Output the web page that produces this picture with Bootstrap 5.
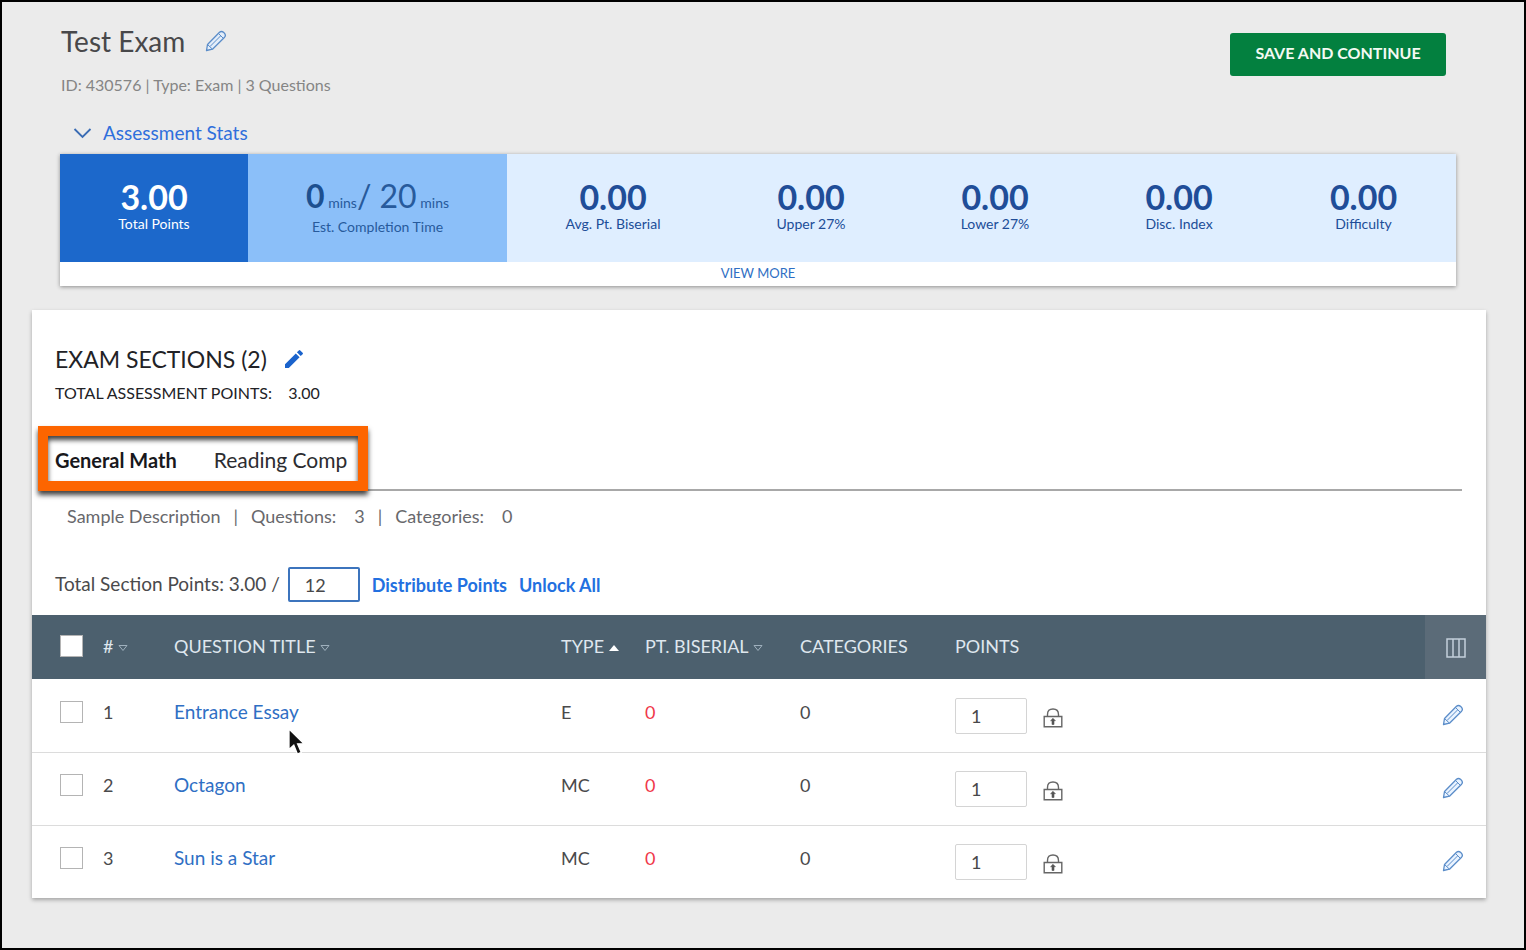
<!DOCTYPE html>
<html lang="en">
<head>
<meta charset="utf-8">
<meta name="viewport" content="width=device-width, initial-scale=1">
<title>Test Exam</title>
<link href="https://cdn.jsdelivr.net/npm/bootstrap@5.3.0/dist/css/bootstrap.min.css" rel="stylesheet">
<style>
  body { font-family: Lato, "Open Sans", sans-serif; font-size: 18px; line-height: 20px; color: #4a4a4c; background: #ebebeb; }
  a { text-decoration: none; color: #2f6fc4; }
  .page-frame { min-height: 100vh; border: 2px solid #000; padding: 0 38px 24px 30px; }
  .page-head { padding: 22px 30px 0 28px; }
  .exam-title { font-size: 28px; line-height: 34px; font-weight: 400; color: #48484a; margin-right: 20px; }
  .exam-meta { font-size: 16px; color: #858585; margin-top: 17px; }
  .title-block { padding-left: 1px; }
  .icon-btn { border: 0; background: none; padding: 0; line-height: 0; color: inherit; }
  .save-btn { font-size: 16px; font-weight: 700; line-height: 20px; width: 216px; padding: 10px 0 13px; margin: 9px 10px 0 0; border-radius: 3px; border: 0; background: #03803f; color: #f3faf3; }
  .stats-toggle { font-size: 19px; line-height: 20px; color: #2f6fdc; margin-top: 28px; padding: 0 0 0 13px; gap: 10px; }
  .stats-box { margin: 11px 0 0; background: #fff; box-shadow: 0 1px 4px rgba(0,0,0,.4); }
  .stats-grid { display: grid; grid-template-columns: 188fr 259fr 212fr 184fr 184fr 184fr 185fr; background: #dfeeff; color: #204d98; text-align: center; }
  .stat { height: 108px; padding-top: 24px; }
  .stat-num { font-size: 34px; line-height: 38px; font-weight: 700; }
  .stat-cap { font-size: 14px; line-height: 16px; }
  .stat-total { background: #1c68cb; color: #fff; }
  .stat-time { background: #8bbff9; color: #275a9c; }
  .stat-time .stat-num { font-size: 32px; font-weight: 400; line-height: 36px; }
  .stat-time .stat-num b { color: #1d5090; }
  .stat-time .stat-cap { margin-top: 5px; }
  .stat-time small { font-size: 14px; line-height: 14px; }
  .view-more { font-size: 13px; line-height: 22px; padding-bottom: 2px; }
  .panel { margin-top: 24px; background: #fff; box-shadow: 0 2px 4px rgba(0,0,0,.3); }
  .panel-head { padding: 35px 24px 13px 23px; }
  .sec-title { font-size: 23px; line-height: 28px; font-weight: 400; color: #222226; margin-right: 18px; }
  .sec-points { font-size: 16px; color: #222226; margin-top: 10px; }
  .sec-points span { margin-left: 12px; }
  .tab-row { margin-top: 45px; padding-bottom: 17px; border-bottom: 2px solid #a8a8a8; }
  .tab-set { position: relative; gap: 37px; }
  .tab-set button { font-size: 21px; line-height: 24px; color: #2c2c30; border: 0; background: none; padding: 0; }
  .tab-set button.active { font-size: 20px; font-weight: 700; color: #18181c; }
  .callout { position: absolute; inset: -22px -21px -19px -17px; border: 10px solid #fd6500; box-shadow: 0 4px 5px rgba(0,0,0,.75), inset 0 4px 5px rgba(0,0,0,.75); pointer-events: none; }
  .desc-row { font-size: 18px; color: #68686c; margin-top: 15px; padding-left: 12px; }
  .desc-row .sep { margin: 0 13px; }
  .desc-row .val { margin-left: 18px; }
  .points-row { margin-top: 41px; gap: 12px; }
  .total-field { gap: 8px; }
  .total-field label { font-size: 19px; padding-bottom: 2px; }
  .pts-input { width: 72px; height: 36px; font-size: 18px; color: #48484a; border: 1px solid #d4d4d4; border-radius: 2px; padding: 0 15px; background: #fff; }
  .pts-input.current { height: 35px; border: 2px solid #3c74bd; outline: 0; }
  .link-btn { border: 0; background: none; padding: 0; font-size: 18px; font-weight: 700; color: #2270e0; }
  .q-table { width: 100%; table-layout: fixed; border-collapse: separate; border-spacing: 0; }
  .q-table th { height: 64px; background: #4c606e; color: #dfe7ee; font-weight: 400; padding: 0 0 2px; white-space: nowrap; }
  .q-table th.cols-cell { background: #5b6b78; padding: 0; }
  .q-table td { height: 73px; padding: 0; border-top: 1px solid #fff; }
  .q-table tbody tr + tr td { border-top-color: #dcdcdc; }
  .q-table td > .lift { display: inline-block; padding-bottom: 8px; }
  .q-table td > a.lift { font-size: 19px; }
  .q-table td.red-val { color: #f0384a; }
  .q-table td.edit-cell { padding: 0 6px 4px 0; }
  .tick { appearance: none; display: block; width: 23px; height: 22px; margin: 0 0 0 28px; border: 1px solid #b4b4b4; background: #fff; }
  tbody .tick { margin-bottom: 8px; }
  .pointer { position: absolute; left: 114px; top: 48px; pointer-events: none; }
</style>
</head>
<body>
<svg width="0" height="0" class="position-absolute" aria-hidden="true">
  <symbol id="pencil" viewBox="0 0 22 22">
    <path d="M1.500 20.500 2.500 14.500 14.500 2.300Q16.500.600 18.800 2.600 21.500 5 19.600 7.200L7.500 19.200Z" fill="#dfeeff" fill-opacity=".7" stroke="#5b8dc9" stroke-width="1.300" stroke-linejoin="round"/>
    <path d="M2.500 14.500 7.500 19.200M13.500 3.500 18.300 8.300M5 16.500 15.500 6" fill="none" stroke="#5b8dc9" stroke-width="1"/>
  </symbol>
  <symbol id="lock" viewBox="0 0 20 20">
    <path d="M1.200 8.500H18.800V18.800H1.200ZM4.500 8.500V6.500Q4.500 1 10 1T15.500 6.500V8.500" fill="none" stroke="#666" stroke-width="1.400"/>
    <path d="M10 10.300 12.400 12.700H11V16.500H9V12.700H7.600Z" fill="#555" stroke="#555" stroke-width=".6"/>
  </symbol>
  <symbol id="sort" viewBox="0 0 10 8"><path d="M1 1.500H9L5 6.500Z" fill="none" stroke="#9fb0bd" stroke-width="1"/></symbol>
</svg>
<div class="page-frame">
  <header class="page-head">
    <div class="d-flex justify-content-between align-items-start">
      <div class="title-block">
        <div class="d-flex align-items-center">
          <h1 class="exam-title mb-0">Test Exam</h1>
          <button class="icon-btn" aria-label="Edit exam title"><svg width="22" height="22"><use href="#pencil"/></svg></button>
        </div>
        <div class="exam-meta">ID: 430576 | Type: Exam | 3 Questions</div>
      </div>
      <button class="btn save-btn">SAVE AND CONTINUE</button>
    </div>
    <button class="icon-btn stats-toggle d-flex align-items-center">
      <svg width="20" height="14" viewBox="0 0 20 14"><path d="M1.500 3 9.500 11 17.500 3" fill="none" stroke="#3a6cb4" stroke-width="1.800"/></svg>
      <span>Assessment Stats</span>
    </button>
    <section class="stats-box">
      <div class="stats-grid">
        <div class="stat stat-total"><div class="stat-num">3.00</div><div class="stat-cap">Total Points</div></div>
        <div class="stat stat-time"><div class="stat-num"><b>0</b><small> mins</small>/ 20<small> mins</small></div><div class="stat-cap">Est. Completion Time</div></div>
        <div class="stat"><div class="stat-num">0.00</div><div class="stat-cap">Avg. Pt. Biserial</div></div>
        <div class="stat"><div class="stat-num">0.00</div><div class="stat-cap">Upper 27%</div></div>
        <div class="stat"><div class="stat-num">0.00</div><div class="stat-cap">Lower 27%</div></div>
        <div class="stat"><div class="stat-num">0.00</div><div class="stat-cap">Disc. Index</div></div>
        <div class="stat"><div class="stat-num">0.00</div><div class="stat-cap">Difficulty</div></div>
      </div>
      <div class="text-center view-more"><a href="#">VIEW MORE</a></div>
    </section>
  </header>

  <main class="panel">
    <div class="panel-head">
      <div class="d-flex align-items-center">
        <h2 class="sec-title mb-0">EXAM SECTIONS (2)</h2>
        <button class="icon-btn" aria-label="Edit sections"><svg width="18" height="18" viewBox="0 0 18 18" fill="#1a63cc"><path d="M0 14.200V18H3.800L14.600 7.200 10.800 3.400ZM11.900 2.300 15.700 6.100 17.600 4.200Q18.300 3.400 17.600 2.700L15.300.400Q14.600-.300 13.800.400Z"/></svg></button>
      </div>
      <div class="sec-points">TOTAL ASSESSMENT POINTS: <span>3.00</span></div>
      <div class="tab-row d-flex">
        <div class="tab-set d-flex" role="tablist">
          <button class="active" role="tab" aria-selected="true">General Math</button>
          <button role="tab" aria-selected="false">Reading Comp</button>
          <div class="callout"></div>
        </div>
      </div>
      <div class="desc-row d-flex">
        <span>Sample Description</span><span class="sep">|</span><span>Questions:</span><span class="val">3</span><span class="sep">|</span><span>Categories:</span><span class="val">0</span>
      </div>
      <div class="points-row d-flex align-items-center">
        <div class="total-field d-flex align-items-center">
          <label for="section-points">Total Section Points: 3.00 /</label>
          <input id="section-points" class="pts-input current" type="text" value="12">
        </div>
        <button class="link-btn">Distribute Points</button>
        <button class="link-btn">Unlock All</button>
      </div>
    </div>
    <table class="q-table">
      <colgroup><col style="width:71px"><col style="width:71px"><col style="width:387px"><col style="width:84px"><col style="width:155px"><col style="width:155px"><col><col style="width:61px"></colgroup>
      <thead>
        <tr>
          <th><input class="tick" type="checkbox" aria-label="Select all questions"></th>
          <th># <svg width="10" height="8"><use href="#sort"/></svg></th>
          <th>QUESTION TITLE <svg width="10" height="8"><use href="#sort"/></svg></th>
          <th>TYPE <svg width="10" height="8" viewBox="0 0 10 8"><path d="M0 7H10L5 1Z" fill="#fff"/></svg></th>
          <th>PT. BISERIAL <svg width="10" height="8"><use href="#sort"/></svg></th>
          <th>CATEGORIES</th>
          <th>POINTS</th>
          <th class="cols-cell text-center"><button class="icon-btn" aria-label="Choose columns"><svg width="20" height="20" viewBox="0 0 20 20"><path d="M1 1H19V19H1ZM7 1V19M13 1V19" fill="none" stroke="#c3d0da" stroke-width="1.500"/></svg></button></th>
        </tr>
      </thead>
      <tbody>
        <tr>
          <td><input class="tick" type="checkbox" aria-label="Select question 1"></td>
          <td><span class="lift">1</span></td>
          <td class="position-relative"><a class="lift" href="#">Entrance Essay</a>
            <svg class="pointer" width="18" height="28" viewBox="0 0 18 28"><path d="M1 1V21.500L5.800 17.200 9.400 26 13.200 24.300 9.600 15.800H16Z" fill="#111" stroke="#fff" stroke-width="1.300"/></svg></td>
          <td><span class="lift">E</span></td><td class="red-val"><span class="lift">0</span></td><td><span class="lift">0</span></td>
          <td><div class="d-flex align-items-center gap-3"><input class="pts-input" type="text" value="1" aria-label="Points for question 1"><button class="icon-btn pt-1" aria-label="Lock points"><svg width="20" height="20"><use href="#lock"/></svg></button></div></td>
          <td class="edit-cell text-center"><button class="icon-btn" aria-label="Edit question 1"><svg width="22" height="22"><use href="#pencil"/></svg></button></td>
        </tr>
        <tr>
          <td><input class="tick" type="checkbox" aria-label="Select question 2"></td>
          <td><span class="lift">2</span></td><td><a class="lift" href="#">Octagon</a></td>
          <td><span class="lift">MC</span></td><td class="red-val"><span class="lift">0</span></td><td><span class="lift">0</span></td>
          <td><div class="d-flex align-items-center gap-3"><input class="pts-input" type="text" value="1" aria-label="Points for question 2"><button class="icon-btn pt-1" aria-label="Lock points"><svg width="20" height="20"><use href="#lock"/></svg></button></div></td>
          <td class="edit-cell text-center"><button class="icon-btn" aria-label="Edit question 2"><svg width="22" height="22"><use href="#pencil"/></svg></button></td>
        </tr>
        <tr>
          <td><input class="tick" type="checkbox" aria-label="Select question 3"></td>
          <td><span class="lift">3</span></td><td><a class="lift" href="#">Sun is a Star</a></td>
          <td><span class="lift">MC</span></td><td class="red-val"><span class="lift">0</span></td><td><span class="lift">0</span></td>
          <td><div class="d-flex align-items-center gap-3"><input class="pts-input" type="text" value="1" aria-label="Points for question 3"><button class="icon-btn pt-1" aria-label="Lock points"><svg width="20" height="20"><use href="#lock"/></svg></button></div></td>
          <td class="edit-cell text-center"><button class="icon-btn" aria-label="Edit question 3"><svg width="22" height="22"><use href="#pencil"/></svg></button></td>
        </tr>
      </tbody>
    </table>
  </main>
</div>
<script src="https://cdn.jsdelivr.net/npm/bootstrap@5.3.0/dist/js/bootstrap.bundle.min.js"></script>
</body>
</html>
